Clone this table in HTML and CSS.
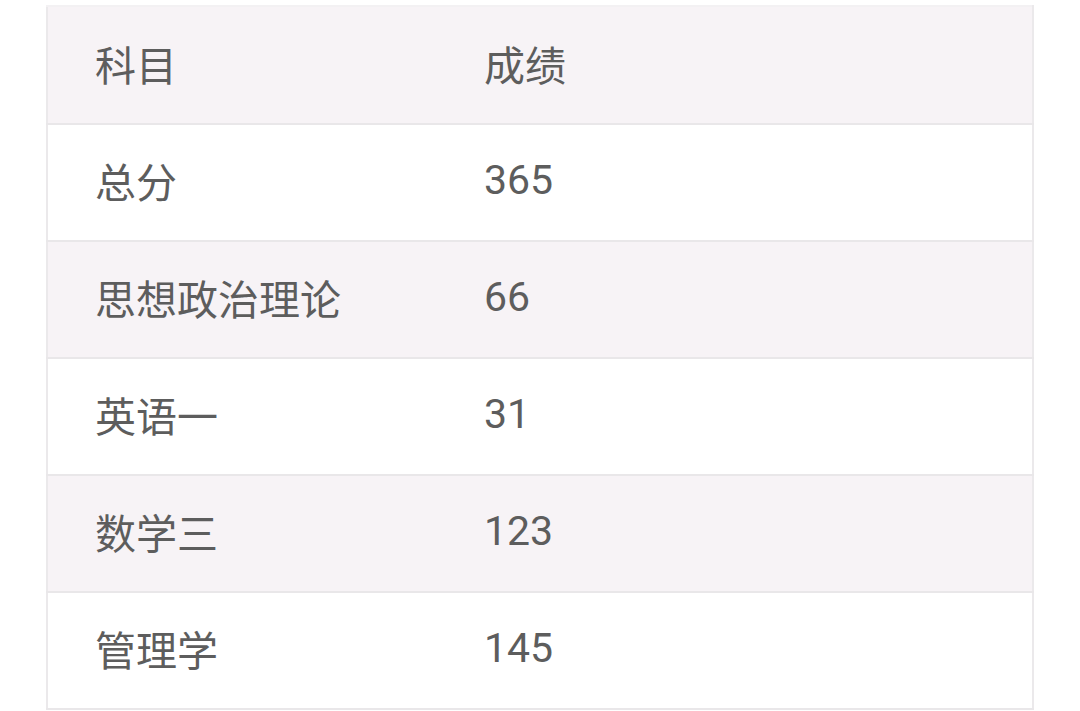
FILE: index.html
```html
<!DOCTYPE html>
<html lang="zh">
<head>
<meta charset="utf-8">
<link rel="stylesheet" href="styles.css">
</head>
<body>
<table class="score">
  <thead>
    <tr class="odd"><th class="c1">科目</th><th class="c2">成绩</th></tr>
  </thead>
  <tbody>
    <tr><td class="c1">总分</td><td class="c2">365</td></tr>
    <tr class="odd"><td class="c1">思想政治理论</td><td class="c2">66</td></tr>
    <tr><td class="c1">英语一</td><td class="c2">31</td></tr>
    <tr class="odd"><td class="c1">数学三</td><td class="c2">123</td></tr>
    <tr><td class="c1">管理学</td><td class="c2">145</td></tr>
  </tbody>
</table>
</body>
</html>
```
FILE: styles.css
```css
html, body {
  margin: 0;
  padding: 0;
  background: #ffffff;
}
body {
  padding: 5px 0 0 46px;
  font-family: Roboto, "Noto Sans CJK SC", sans-serif;
}
.score {
  border-collapse: collapse;
  width: 988px;
  border: 2px solid #ebe9eb;
  border-top-color: #f3f1f3;
}
.score th, .score td {
  height: 117px;
  padding: 0 0 5px 47px;
  text-align: left;
  font-weight: 400;
  font-size: 41px;
  color: #5d5d5d;
  border-bottom: 2px solid #e9e7e9;
  vertical-align: middle;
  box-sizing: border-box;
}
.score .c1 { width: 437px; }
.score .c2 { padding-left: 0; }
.score tr.odd { background: #f7f3f6; }
.score thead th { height: 118px; }
```
